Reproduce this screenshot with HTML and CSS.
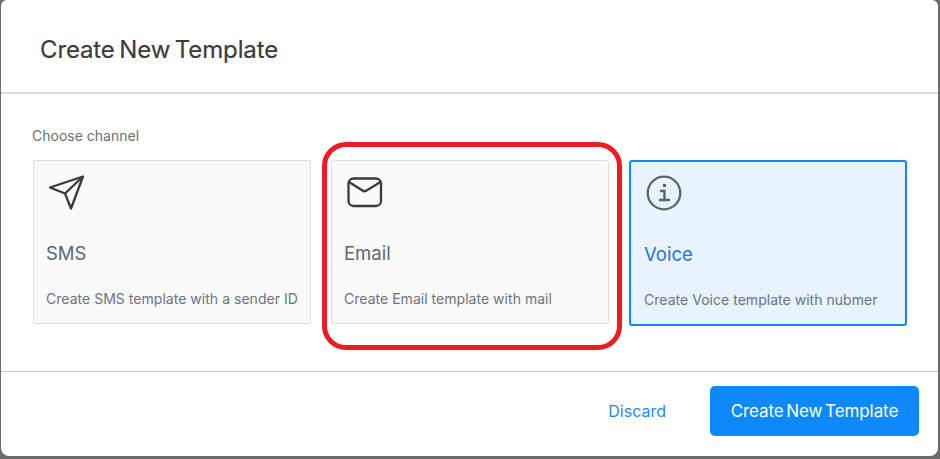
FILE: index.html
```html
<!DOCTYPE html>
<html lang="en">
<head>
<meta charset="utf-8">
<title>Create New Template</title>
<link rel="stylesheet" href="styles.css">
</head>
<body>
<div class="modal">
  <header class="modal-header"><h1>Create New Template</h1></header>
  <section class="modal-body">
    <div class="label">Choose channel</div>
    <div class="cards">
      <div class="card">
        <svg class="icon" width="40" height="40" viewBox="0 0 40 40" fill="none" stroke="#3a3a3a" stroke-width="2.300" stroke-linejoin="round"><path d="M37 2.500 L4 13.500 L19 19.500 L25 34.500 Z"/><path d="M37 2.500 L19 19.500"/></svg>
        <div class="name">SMS</div>
        <div class="desc">Create SMS template with a sender ID</div>
      </div>
      <div class="card">
        <svg class="icon" width="40" height="40" viewBox="0 0 40 40" fill="none" stroke="#3a3a3a" stroke-width="2.300" stroke-linecap="round" stroke-linejoin="round"><rect x="4.500" y="4.500" width="32.500" height="27.500" rx="5"/><path d="M5 8 L18.500 16.500 Q20.500 18 22.500 16.500 L36.500 8"/></svg>
        <div class="name">Email</div>
        <div class="desc">Create Email template with mail</div>
      </div>
      <div class="card selected">
        <svg class="icon" width="40" height="40" viewBox="0 0 40 40" fill="none" stroke="#5f6368" stroke-width="2.300"><circle cx="20" cy="18" r="16.300"/><path stroke-width="2.300" d="M16 16 H20.500 V25 M15 25 H26"/><path stroke-width="3" d="M19 10.500 H22"/></svg>
        <div class="name">Voice</div>
        <div class="desc">Create Voice template with nubmer</div>
      </div>
    </div>
  </section>
  <footer class="modal-footer">
    <a class="discard">Discard</a>
    <button class="primary" type="button">Create New Template</button>
  </footer>
</div>
<div class="callout"></div>
</body>
</html>
```
FILE: styles.css
```css
* { box-sizing: border-box; }
html, body { margin: 0; height: 100%; }
body {
  width: 940px;
  height: 459px;
  background: #6b6b6b;
  font-family: Inter, "Noto Sans", sans-serif;
  overflow: hidden;
  position: relative;
  padding: 0 2px 3px 1px;
}
.modal {
  height: 456px;
  background: #fff;
  border-radius: 6px 6px 8px 8px;
  display: flex;
  flex-direction: column;
}
.modal-header {
  height: 94px;
  border-bottom: 2px solid #dcdcdc;
  padding: 35px 0 0 39px;
}
h1 {
  margin: 0;
  font-size: 24px;
  line-height: 29px;
  font-weight: 400;
  letter-spacing: -0.13px;
  word-spacing: -2px;
  color: #3c3c3c;
  -webkit-text-stroke: 0.2px #3c3c3c;
}
.modal-body {
  height: 278px;
  border-bottom: 1px solid #c8c8c8;
  padding: 33px 0 0 32px;
}
.label {
  font-size: 14px;
  line-height: 17px;
  color: #6f6f6f;
  margin-bottom: 16px;
  margin-left: -1px;
}
.cards { display: flex; gap: 20px; align-items: flex-start; }
.card {
  width: 278px;
  height: 164px;
  background: #fafafa;
  border: 1px solid #dcdcdc;
  border-radius: 3px;
  padding: 13px 12px;
}
.card.selected {
  height: 166px;
  background: #e8f3fe;
  border: 2px solid #0d89fc;
  padding-left: 13px;
}
.icon { display: block; }
.name {
  margin-top: 28px;
  font-size: 18.500px;
  line-height: 22px;
  color: #5c6670;
}
.desc {
  margin-top: 26px;
  font-size: 14px;
  line-height: 17px;
  letter-spacing: 0.03px;
  color: #6b7480;
}
.selected .name { color: #1a73e0; }
.modal-footer {
  flex: 1;
  display: flex;
  align-items: flex-start;
  justify-content: flex-end;
  padding: 14px 19px 0 0;
  gap: 44px;
}
.discard {
  font-size: 16px;
  line-height: 50px;
  color: #1a8cfa;
}
.primary {
  width: 209px;
  height: 50px;
  background: #0d89fc;
  border: 0;
  border-radius: 5px;
  color: #fff;
  font: 400 17px Inter, "Noto Sans", sans-serif;
  letter-spacing: -0.09px;
  word-spacing: -2px;
}
.callout {
  position: absolute;
  left: 322px;
  top: 142px;
  width: 300px;
  height: 208px;
  border: 5px solid #ed1c24;
  border-radius: 24px;
}
```
